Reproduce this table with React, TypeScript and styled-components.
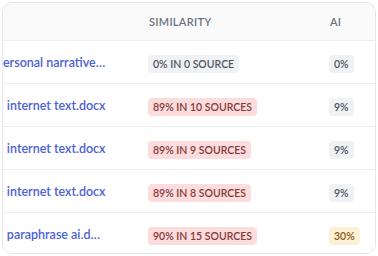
import styled, { createGlobalStyle } from 'styled-components'

const GlobalStyle = createGlobalStyle`
  * {
    box-sizing: border-box;
    margin: 0;
    padding: 0;
  }
  html, body {
    background: #ffffff;
    font-family: Lato, "Noto Sans", sans-serif;
  }
  body {
    padding: 2px;
  }
`

type Tone = 'gray' | 'red' | 'yellow'

const tones: Record<Tone, { bg: string; fg: string }> = {
  gray: { bg: '#eff1f4', fg: '#4f5663' },
  red: { bg: '#fcdcdc', fg: '#86393a' },
  yellow: { bg: '#fdf0d4', fg: '#8a5b16' },
}

const Card = styled.div`
  width: 374px;
  height: 252px;
  border: 1px solid #e4e6ea;
  border-radius: 10px;
  overflow: hidden;
  background: #fff;
`

// the table is scrolled a little to the right, so the name column starts off-view
const Table = styled.div`
  margin-left: -28px;
  display: flex;
  flex-direction: column;
`

const Row = styled.div<{ $head?: boolean }>`
  display: grid;
  grid-template-columns: 173px 181px 1fr;
  align-items: center;
  height: ${(p) => (p.$head ? '38px' : '43px')};
  background: ${(p) => (p.$head ? '#fafafb' : '#fff')};
  border-bottom: 1px solid #eceef1;
`

const HeadCell = styled.div`
  padding-left: 1px;
  font-size: 11px;
  font-weight: 600;
  letter-spacing: 0.3px;
  color: #6b7280;
`

const NameCell = styled.div`
  padding-right: 42px;
  min-width: 0;
`

const FileLink = styled.a`
  display: block;
  white-space: nowrap;
  overflow: hidden;
  text-overflow: ellipsis;
  font-size: 12.5px;
  font-weight: 600;
  color: #4b61d6;
  text-decoration: none;
`

const Badge = styled.span<{ $tone: Tone }>`
  display: inline-block;
  padding: 3px 5px;
  border-radius: 4px;
  font-size: 10.5px;
  font-weight: 600;
  line-height: 12px;
  text-transform: uppercase;
  background: ${(p) => tones[p.$tone].bg};
  color: ${(p) => tones[p.$tone].fg};
`

const rows = [
  { name: 'My personal narrative essay.docx', sim: '0% in 0 source', simTone: 'gray', ai: '0%', aiTone: 'gray' },
  { name: 'Mia - internet text.docx', sim: '89% in 10 sources', simTone: 'red', ai: '9%', aiTone: 'gray' },
  { name: 'Mia - internet text.docx', sim: '89% in 9 sources', simTone: 'red', ai: '9%', aiTone: 'gray' },
  { name: 'Mia - internet text.docx', sim: '89% in 8 sources', simTone: 'red', ai: '9%', aiTone: 'gray' },
  { name: 'Mia - paraphrase ai.docx', sim: '90% in 15 sources', simTone: 'red', ai: '30%', aiTone: 'yellow' },
] as const

export default function App() {
  return (
    <>
      <GlobalStyle />
      <Card>
        <Table>
          <Row $head>
            <HeadCell />
            <HeadCell>SIMILARITY</HeadCell>
            <HeadCell>AI</HeadCell>
          </Row>
          {rows.map((r) => (
            <Row key={r.sim}>
              <NameCell>
                <FileLink href="#">{r.name}</FileLink>
              </NameCell>
              <div>
                <Badge $tone={r.simTone}>{r.sim}</Badge>
              </div>
              <div>
                <Badge $tone={r.aiTone}>{r.ai}</Badge>
              </div>
            </Row>
          ))}
        </Table>
      </Card>
    </>
  )
}
